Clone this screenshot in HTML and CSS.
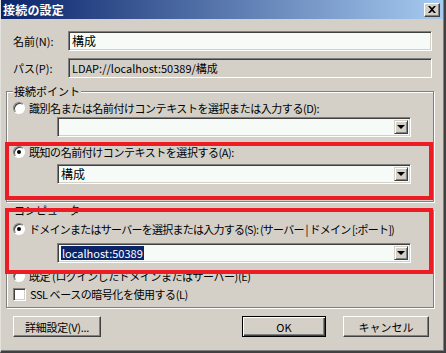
FILE: index.html
```html
<!DOCTYPE html>
<html lang="ja">
<head>
    <meta charset="UTF-8">
    <meta name="viewport" content="width=device-width, initial-scale=1.0">
    <title>接続の設定</title>
    <link rel="stylesheet" href="styles.css">
</head>
<body>
    <div class="window">
        <div class="titlebar">
            <span class="title">接続の設定</span>
            <span class="close-button">
                <svg width="8" height="7" viewBox="0 0 8 7">
                    <path d="M0 0h2l2 2l2-2h2l-3 3.5l3 3.5h-2l-2-2l-2 2h-2l3-3.5z" fill="#000"/>
                </svg>
            </span>
        </div>

        <div class="content">
            <div class="field-row">
                <span class="field-label">名前(N):</span>
                <div class="textbox">構成</div>
            </div>
            <div class="field-row path-row">
                <span class="field-label">パス(P):</span>
                <div class="textbox readonly">LDAP://localhost:50389/構成</div>
            </div>

            <div class="group">
                <span class="group-title">接続ポイント</span>
                <div class="option first-option">
                    <span class="radio"></span>
                    <span>識別名または名前付けコンテキストを選択または入力する(D):</span>
                </div>
                <div class="combo combo-after-first">
                    <span class="combo-text"></span>
                    <span class="combo-button"><span class="arrow"></span></span>
                </div>
                <div class="option known-option">
                    <span class="radio checked"></span>
                    <span>既知の名前付けコンテキストを選択する(A):</span>
                </div>
                <div class="combo combo-known">
                    <span class="combo-text">構成</span>
                    <span class="combo-button"><span class="arrow"></span></span>
                </div>
            </div>

            <div class="group computer-group">
                <span class="group-title">コンピューター</span>
                <div class="option server-option">
                    <span class="radio checked"></span>
                    <span>ドメインまたはサーバーを選択または入力する(S): (サーバー | ドメイン [:ポート])</span>
                </div>
                <div class="combo combo-server">
                    <span class="combo-text"><span class="selected">localhost:50389</span></span>
                    <span class="combo-button"><span class="arrow"></span></span>
                </div>
                <div class="option default-option">
                    <span class="radio"></span>
                    <span>既定 (ログインしたドメインまたはサーバー)(E)</span>
                </div>
                <div class="option ssl-option">
                    <span class="checkbox"></span>
                    <span>SSL ベースの暗号化を使用する(L)</span>
                </div>
            </div>

            <div class="buttons">
                <span class="button advanced">詳細設定(V)...</span>
                <span class="button ok default">OK</span>
                <span class="button cancel">キャンセル</span>
            </div>
        </div>

        <!-- red annotation frames drawn over the dialog -->
        <div class="mark mark-known"></div>
        <div class="mark mark-server"></div>
    </div>
</body>
</html>
```

FILE: styles.css
```css
/* styles.css */
body {
    margin: 0;
    background: #d4d0c8;
    font-family: "Noto Sans CJK JP", "Liberation Sans", sans-serif;
    font-size: 11px;
    color: #000;
}

.window {
    position: relative;
    width: 446px;
    height: 353px;
    box-sizing: border-box;
    background: #d4d0c8;
    border-left: 1px solid #e4e2dc;
    border-right: 2px solid #404040;
    border-bottom: 2px solid #404040;
    box-shadow: inset -1px -1px 0 #808080;
    overflow: hidden;
}

.titlebar {
    display: flex;
    align-items: center;
    justify-content: space-between;
    height: 19px;
    margin-right: 1px;
    padding: 0 3px 0 2px;
    background: linear-gradient(to right, #0a246a, #a6caf0);
}

.title {
    color: #fff;
    font-weight: bold;
    font-size: 12px;
    letter-spacing: 0.2px;
}

.close-button {
    display: flex;
    align-items: center;
    justify-content: center;
    width: 14px;
    height: 12px;
    background: #d4d0c8;
    border: 1px solid;
    border-color: #fff #404040 #404040 #fff;
    box-shadow: inset -1px -1px 0 #808080;
}

.content {
    display: flex;
    flex-direction: column;
    padding: 12px 10px 0 5px;
}

.field-row {
    display: flex;
    align-items: center;
    height: 20px;
    margin: 0 2px 0 7px;
}

.path-row {
    margin-top: 7px;
}

.field-label {
    width: 55px;
    flex: none;
}

.textbox {
    flex: 1;
    height: 20px;
    box-sizing: border-box;
    padding: 0 3px;
    line-height: 18px;
    background: #f7fbf7;
    border: 1px solid;
    border-color: #808080 #fff #fff #808080;
    box-shadow: inset 1px 1px 0 #404040, inset -1px -1px 0 #d4d0c8;
    font-size: 12px;
}

.textbox.readonly {
    background: #d4d0c8;
    font-size: 11px;
}

.group {
    display: flex;
    flex-direction: column;
    margin-top: 13px;
    padding: 0 0 17px 6px;
    border: 1px solid #808080;
    box-shadow: inset 1px 1px 0 #fff, 1px 1px 0 #fff;
}

.computer-group {
    margin-top: 8px;
    padding-bottom: 5px;
}

.group-title {
    align-self: flex-start;
    height: 14px;
    line-height: 14px;
    margin: -8px 0 0 0;
    padding: 0 1px;
    background: #d4d0c8;
}

.option {
    display: flex;
    align-items: center;
    gap: 4px;
    height: 16px;
    white-space: nowrap;
    letter-spacing: -0.45px;
}

.first-option {
    margin-top: 2px;
}

.known-option {
    margin-top: 7px;
}

.server-option {
    margin-top: 4px;
    letter-spacing: -0.75px;
}

.default-option {
    margin-top: 5px;
}

.ssl-option {
    margin-top: 2px;
}

.radio {
    position: relative;
    width: 12px;
    height: 12px;
    box-sizing: border-box;
    flex: none;
    border-radius: 50%;
    background: #fff;
    border: 1px solid;
    border-color: #808080 #fff #fff #808080;
    box-shadow: inset 1px 1px 0 #404040;
}

.radio.checked::after {
    content: "";
    position: absolute;
    left: 3px;
    top: 3px;
    width: 4px;
    height: 4px;
    border-radius: 50%;
    background: #000;
}

.checkbox {
    width: 13px;
    height: 13px;
    box-sizing: border-box;
    flex: none;
    background: #fff;
    border: 1px solid;
    border-color: #808080 #fff #fff #808080;
    box-shadow: inset 1px 1px 0 #404040, inset -1px -1px 0 #d4d0c8;
}

.combo {
    display: flex;
    height: 20px;
    box-sizing: border-box;
    margin: 0 22px 0 44px;
    padding: 2px;
    background: #f7fbf7;
    border: 1px solid;
    border-color: #808080 #fff #fff #808080;
    box-shadow: inset 1px 1px 0 #404040, inset -1px -1px 0 #d4d0c8;
}

.combo-after-first {
    margin-top: 1px;
}

.combo-known {
    margin-top: 4px;
}

.combo-server {
    margin-top: 6px;
}

.combo-text {
    flex: 1;
    line-height: 14px;
    padding-left: 1px;
    font-size: 12px;
}

.selected {
    display: inline-block;
    padding: 0 1px;
    background: #0a246a;
    color: #fff;
    font-size: 11px;
}

.combo-button {
    display: flex;
    align-items: center;
    justify-content: center;
    width: 14px;
    box-sizing: border-box;
    background: #d4d0c8;
    border: 1px solid;
    border-color: #d4d0c8 #404040 #404040 #d4d0c8;
    box-shadow: inset 1px 1px 0 #fff, inset -1px -1px 0 #808080;
}

.arrow {
    width: 0;
    height: 0;
    border-left: 4px solid transparent;
    border-right: 4px solid transparent;
    border-top: 4px solid #000;
}

.buttons {
    display: flex;
    margin: 8px 0 0 7px;
}

.button {
    display: flex;
    align-items: center;
    justify-content: center;
    height: 21px;
    box-sizing: border-box;
    background: #d4d0c8;
    border: 1px solid;
    border-color: #fff #404040 #404040 #fff;
    box-shadow: inset -1px -1px 0 #808080;
}

.advanced {
    width: 88px;
    letter-spacing: -0.3px;
}

.ok {
    width: 84px;
    margin-left: auto;
}

.button.default {
    border: 1px solid #000;
    box-shadow: inset 1px 1px 0 #fff, inset -1px -1px 0 #404040, inset -2px -2px 0 #808080;
}

.cancel {
    width: 86px;
    margin: 0 5px 0 17px;
}

.mark {
    position: absolute;
    left: 4px;
    width: 428px;
    box-sizing: border-box;
    border: 4px solid #ed1c24;
}

.mark-known {
    top: 142px;
    height: 58px;
}

.mark-server {
    top: 208px;
    height: 66px;
}
```
